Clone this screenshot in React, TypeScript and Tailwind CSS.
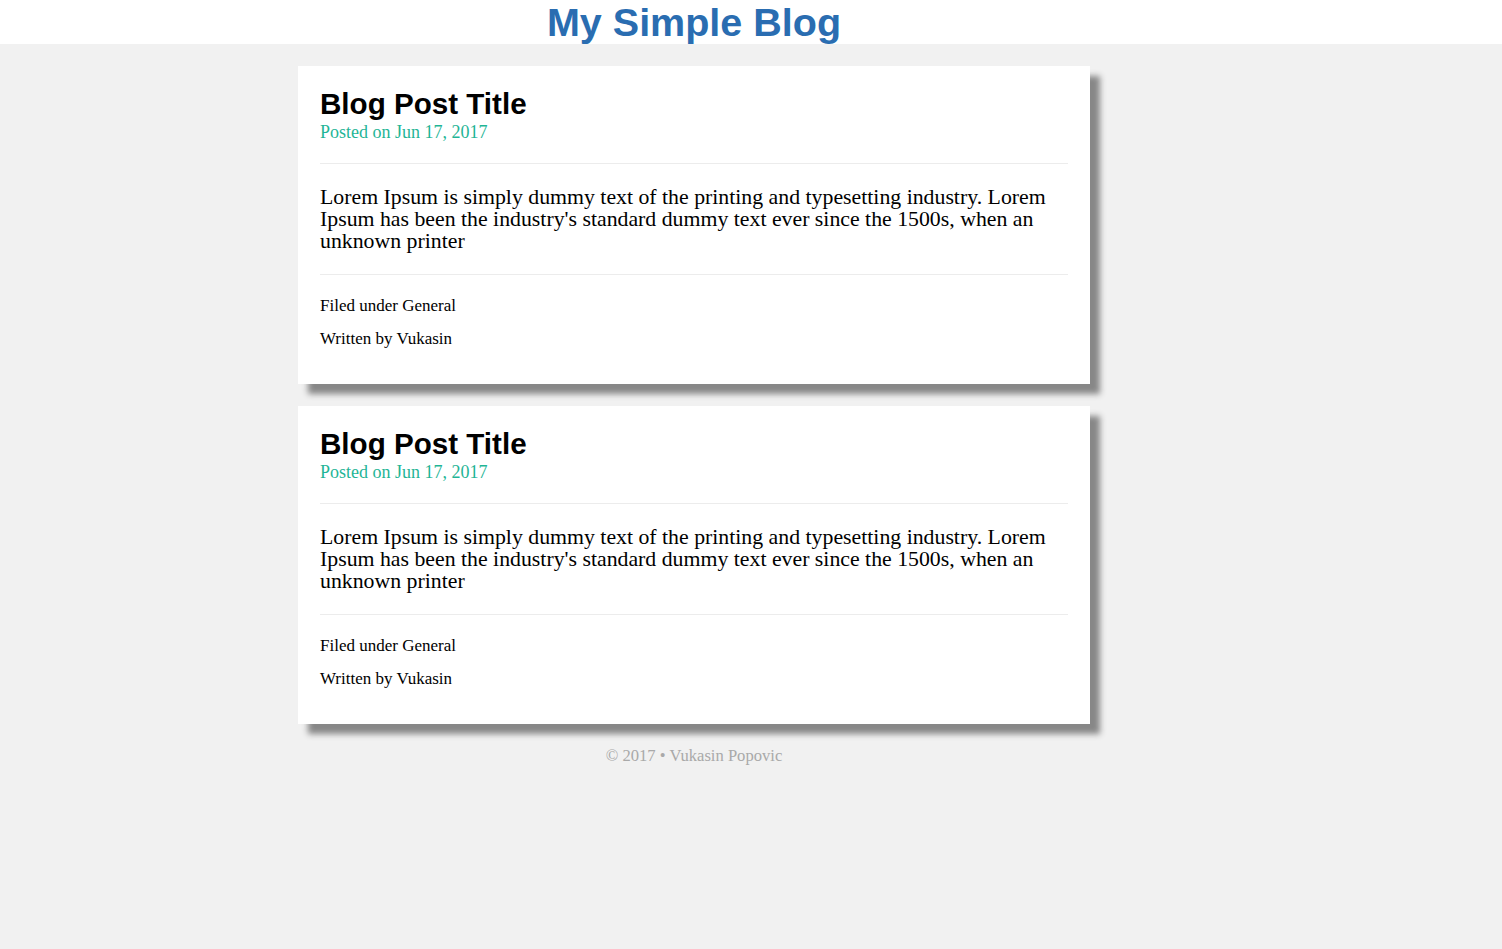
const posts = [
  {
    title: "Blog Post Title",
    date: "Jun 17, 2017",
    body: "Lorem Ipsum is simply dummy text of the printing and typesetting industry. Lorem Ipsum has been the industry's standard dummy text ever since the 1500s, when an unknown printer",
    category: "General",
    author: "Vukasin",
  },
  {
    title: "Blog Post Title",
    date: "Jun 17, 2017",
    body: "Lorem Ipsum is simply dummy text of the printing and typesetting industry. Lorem Ipsum has been the industry's standard dummy text ever since the 1500s, when an unknown printer",
    category: "General",
    author: "Vukasin",
  },
];

function Post({ post }: { post: (typeof posts)[number] }) {
  return (
    <article className="bg-white px-[22px] pt-[20px] pb-[35px] shadow-[10px_10px_6px_#878787]">
      <h2 className="font-['Liberation_Sans',Arial,sans-serif] font-bold text-[29.6px] leading-[36px] text-black">
        {post.title}
      </h2>
      <div className="font-['Liberation_Serif',serif] text-[18px] leading-[20px] text-[#1fb596]">
        Posted on {post.date}
      </div>
      <hr className="mt-[21px] border-t border-[#ececec]" />
      <p className="mt-[22px] font-['Liberation_Serif',serif] text-[21.8px] leading-[22px] text-black">
        {post.body}
      </p>
      <hr className="mt-[22px] border-t border-[#ececec]" />
      <div className="mt-[21px] font-['Liberation_Serif',serif] text-[17px] leading-[20px] text-black flex flex-col gap-[13px]">
        <div>Filed under {post.category}</div>
        <div>Written by {post.author}</div>
      </div>
    </article>
  );
}

export default function App() {
  return (
    <div className="min-h-screen bg-[#f1f1f1]">
      <header className="bg-white h-[44px]">
        <div className="ml-[298px] w-[792px] text-center">
          <h1 className="font-['Liberation_Sans',Arial,sans-serif] font-bold text-[39.5px] leading-[44px] text-[#2a6db1]">
            My Simple Blog
          </h1>
        </div>
      </header>
      <main className="ml-[298px] w-[792px] pt-[22px] flex flex-col gap-[22px]">
        {posts.map((p, i) => (
          <Post key={i} post={p} />
        ))}
      </main>
      <footer className="ml-[298px] w-[792px] mt-[20px] text-center font-['Liberation_Serif',serif] text-[16.6px] text-[#a9a9a9]">
        © 2017 • Vukasin Popovic
      </footer>
    </div>
  );
}
